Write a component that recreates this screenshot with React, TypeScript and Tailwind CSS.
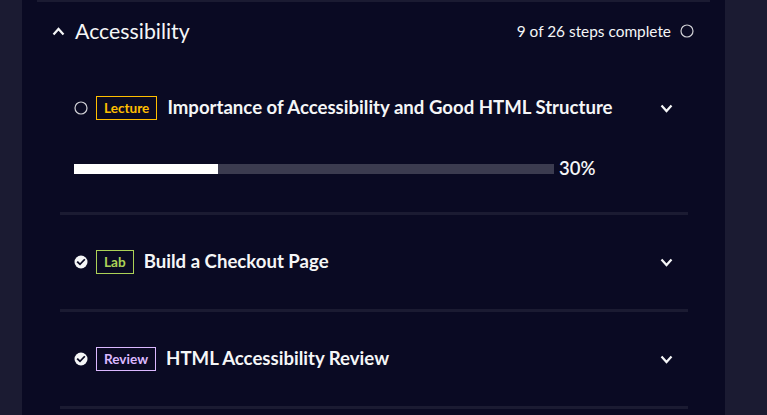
const font = { fontFamily: 'Lato, "Noto Sans", sans-serif' };

type Kind = 'Lecture' | 'Lab' | 'Review';

const badgeStyles: Record<Kind, string> = {
  Lecture: 'border-[#ffbf00] text-[#ffbf00]',
  Lab: 'border-[#acd157] text-[#acd157]',
  Review: 'border-[#dbb8ff] text-[#dbb8ff]',
};

function EmptyCircle() {
  return (
    <svg width="14" height="14" viewBox="0 0 14 14" className="shrink-0">
      <circle cx="7" cy="7" r="6" fill="none" stroke="#d0d0d5" strokeWidth="1.2" />
    </svg>
  );
}

function CheckCircle() {
  return (
    <svg width="14" height="14" viewBox="0 0 14 14" className="shrink-0">
      <circle cx="7" cy="7" r="6.5" fill="#f5f6f7" />
      <polyline
        points="3.8,7.2 6,9.3 10.2,4.9"
        fill="none"
        stroke="#0a0a23"
        strokeWidth="1.8"
        strokeLinecap="square"
      />
    </svg>
  );
}

function Chevron({ up = false }: { up?: boolean }) {
  return (
    <svg width="13" height="9" viewBox="0 0 13 9" className="shrink-0">
      <polyline
        points={up ? '1.5,7.5 6.5,2 11.5,7.5' : '1.5,1.5 6.5,7 11.5,1.5'}
        fill="none"
        stroke="#f5f6f7"
        strokeWidth="2.2"
      />
    </svg>
  );
}

function Item({
  kind,
  title,
  done,
  progress,
}: {
  kind: Kind;
  title: string;
  done: boolean;
  progress?: number;
}) {
  const hasBar = progress !== undefined;
  return (
    <div
      className={`border-b-[3px] border-[#1b1b32] pt-[35px] px-[14px] ${
        hasBar ? 'pb-[38px]' : 'pb-[35px]'
      }`}
    >
      <div className="flex items-center h-[24px]">
        {done ? <CheckCircle /> : <EmptyCircle />}
        <span
          className={`ml-[8px] h-[24px] flex items-center border px-[7px] text-[13.6px] font-bold ${badgeStyles[kind]}`}
        >
          {kind}
        </span>
        <span className="ml-[10px] text-[18.6px] font-bold text-[#f5f6f7]">{title}</span>
        <span className="ml-auto mr-[1px]">
          <Chevron />
        </span>
      </div>
      {hasBar && (
        <div className="flex items-center mt-[44px] h-[10px]">
          <div className="w-[480px] h-[10px] bg-[#3b3b4f]">
            <div className="h-full bg-white" style={{ width: `${progress}%` }} />
          </div>
          <span className="ml-[5px] text-[18.5px] font-semibold text-[#f5f6f7]">{progress}%</span>
        </div>
      )}
    </div>
  );
}

export default function App() {
  return (
    <div className="min-h-screen bg-[#1b1b32] pl-[22px]" style={font}>
      <div className="w-[703px] min-h-[415px] bg-[#0a0a23]">
        <div className="mx-[15px] h-[2px] bg-[#1b1b32]" />
        <div className="flex items-center justify-between h-[59px] pl-[30px] pr-[31px]">
          <div className="flex items-center">
            <Chevron up />
            <span className="ml-[10px] text-[21.3px] text-[#f5f6f7]">Accessibility</span>
          </div>
          <div className="flex items-center">
            <span className="text-[15.4px] text-[#f5f6f7]">9 of 26 steps complete</span>
            <span className="ml-[9px]">
              <EmptyCircle />
            </span>
          </div>
        </div>
        <div className="ml-[38px] mr-[37px]">
          <Item
            kind="Lecture"
            title="Importance of Accessibility and Good HTML Structure"
            done={false}
            progress={30}
          />
          <Item kind="Lab" title="Build a Checkout Page" done />
          <Item kind="Review" title="HTML Accessibility Review" done />
        </div>
      </div>
    </div>
  );
}
